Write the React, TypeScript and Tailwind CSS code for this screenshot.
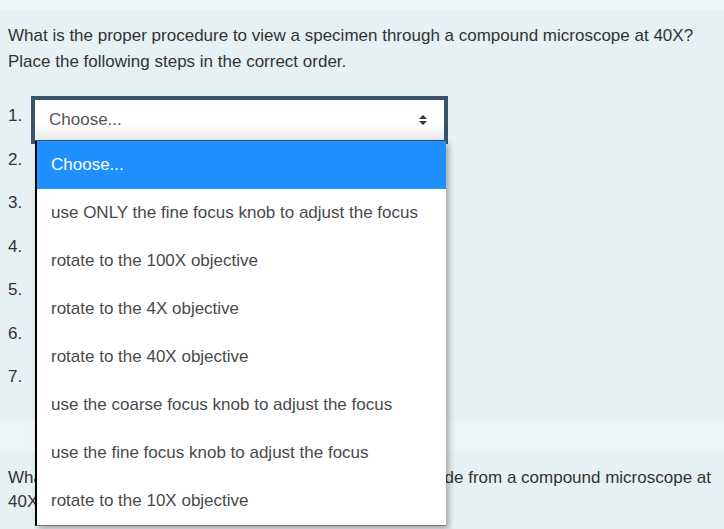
const steps = [
  'use ONLY the fine focus knob to adjust the focus',
  'rotate to the 100X objective',
  'rotate to the 4X objective',
  'rotate to the 40X objective',
  'use the coarse focus knob to adjust the focus',
  'use the fine focus knob to adjust the focus',
  'rotate to the 10X objective',
];

function UpDown() {
  return (
    <svg width="10" height="12" viewBox="0 0 10 12" className="text-[#333]">
      <path d="M1 5 L5 1 L9 5 Z" fill="currentColor" />
      <path d="M1 7 L5 11 L9 7 Z" fill="currentColor" />
    </svg>
  );
}

function SelectBox({ focused }: { focused?: boolean }) {
  return (
    <div
      className={`relative w-[409px] h-10 flex items-center justify-between pl-[14px] pr-[16px] bg-gradient-to-b from-white from-60% to-[#e9e9e9] text-[#555] ${
        focused ? 'outline-4 outline-[#3b526c]' : 'border border-[#ccc]'
      }`}
    >
      <span>Choose...</span>
      <UpDown />
    </div>
  );
}

function Dropdown() {
  return (
    <div className="absolute left-[35px] top-[141px] w-[411px] bg-white border-l-2 border-black border-b border-b-[#777] shadow-[3px_3px_6px_rgba(0,0,0,0.3)] z-10">
      <div className="h-12 flex items-center pl-[14px] bg-[#1e90ff] text-white">Choose...</div>
      {steps.map(s => (
        <div key={s} className="h-12 flex items-center pl-[14px] text-[#4a4a4a]">
          {s}
        </div>
      ))}
    </div>
  );
}

export default function App() {
  return (
    <div className="relative min-h-[529px] bg-[#edf5f8] pt-[10px] text-[17px] text-[#333] font-['Liberation_Sans',Arial,sans-serif] overflow-hidden">
      <div className="bg-[#e6f1f4] pl-2 pr-2 pt-[13px] pb-[16px]">
        <p className="leading-[26px]">
          What is the proper procedure to view a specimen through a compound microscope at 40X?
          <br />
          Place the following steps in the correct order.
        </p>
        <div className="mt-[25px] flex flex-col">
          {[1, 2, 3, 4, 5, 6, 7].map(n => (
            <div key={n} className="flex h-[43.5px]">
              <span className="w-[27px] leading-6 mt-[4px]">{n}.</span>
              <SelectBox focused={n === 1} />
            </div>
          ))}
        </div>
      </div>
      <div className="h-[30px]" />
      <div className="bg-[#e6f1f4] pl-2 pr-1 pt-[15px] pb-4">
        <p className="leading-6">
          What is the total magnification, when viewing specimen slide from a compound microscope at 40X?
        </p>
      </div>
      <Dropdown />
    </div>
  );
}
